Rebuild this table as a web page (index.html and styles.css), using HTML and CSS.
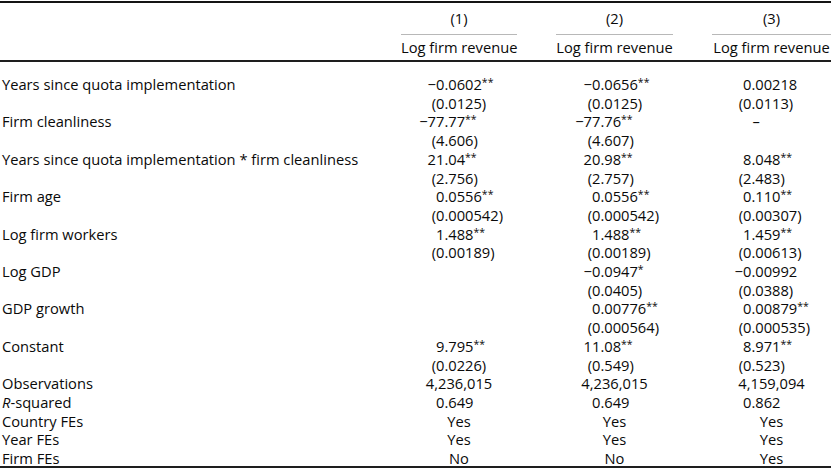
FILE: index.html
```html
<!DOCTYPE html>
<html lang="en">
<head>
<meta charset="utf-8">
<title>Regression table</title>
<link rel="stylesheet" href="styles.css">
</head>
<body>
<div class="tbl">
  <div class="row head1">
    <div class="lab"></div>
    <div class="c">(1)</div>
    <div class="c">(2)</div>
    <div class="c">(3)</div>
  </div>
  <div class="row head2">
    <div class="lab"></div>
    <div class="c">Log firm revenue</div>
    <div class="c">Log firm revenue</div>
    <div class="c">Log firm revenue</div>
  </div>
  <div class="body">
    <div class="row">
      <div class="lab">Years since quota implementation</div>
      <div class="c1"><span class="i">−0</span>.0602<sup>**</sup></div>
      <div class="c2"><span class="i">−0</span>.0656<sup>**</sup></div>
      <div class="c3"><span class="i">0</span>.00218</div>
    </div>
    <div class="row">
      <div class="lab"></div>
      <div class="c1"><span class="i">(0</span>.0125)</div>
      <div class="c2"><span class="i">(0</span>.0125)</div>
      <div class="c3"><span class="i">(0</span>.0113)</div>
    </div>
    <div class="row">
      <div class="lab">Firm cleanliness</div>
      <div class="c1"><span class="i">−77</span>.77<sup>**</sup></div>
      <div class="c2"><span class="i">−77</span>.76<sup>**</sup></div>
      <div class="c3"><span class="i"></span><span class="dash">–</span></div>
    </div>
    <div class="row">
      <div class="lab"></div>
      <div class="c1"><span class="i">(4</span>.606)</div>
      <div class="c2"><span class="i">(4</span>.607)</div>
      <div class="c3"></div>
    </div>
    <div class="row">
      <div class="lab">Years since quota implementation * firm cleanliness</div>
      <div class="c1"><span class="i">21</span>.04<sup>**</sup></div>
      <div class="c2"><span class="i">20</span>.98<sup>**</sup></div>
      <div class="c3"><span class="i">8</span>.048<sup>**</sup></div>
    </div>
    <div class="row">
      <div class="lab"></div>
      <div class="c1"><span class="i">(2</span>.756)</div>
      <div class="c2"><span class="i">(2</span>.757)</div>
      <div class="c3"><span class="i">(2</span>.483)</div>
    </div>
    <div class="row">
      <div class="lab">Firm age</div>
      <div class="c1"><span class="i">0</span>.0556<sup>**</sup></div>
      <div class="c2"><span class="i">0</span>.0556<sup>**</sup></div>
      <div class="c3"><span class="i">0</span>.110<sup>**</sup></div>
    </div>
    <div class="row">
      <div class="lab"></div>
      <div class="c1"><span class="i">(0</span>.000542)</div>
      <div class="c2"><span class="i">(0</span>.000542)</div>
      <div class="c3"><span class="i">(0</span>.00307)</div>
    </div>
    <div class="row">
      <div class="lab">Log firm workers</div>
      <div class="c1"><span class="i">1</span>.488<sup>**</sup></div>
      <div class="c2"><span class="i">1</span>.488<sup>**</sup></div>
      <div class="c3"><span class="i">1</span>.459<sup>**</sup></div>
    </div>
    <div class="row">
      <div class="lab"></div>
      <div class="c1"><span class="i">(0</span>.00189)</div>
      <div class="c2"><span class="i">(0</span>.00189)</div>
      <div class="c3"><span class="i">(0</span>.00613)</div>
    </div>
    <div class="row">
      <div class="lab">Log GDP</div>
      <div class="c1"></div>
      <div class="c2"><span class="i">−0</span>.0947<sup>*</sup></div>
      <div class="c3"><span class="i">−0</span>.00992</div>
    </div>
    <div class="row">
      <div class="lab"></div>
      <div class="c1"></div>
      <div class="c2"><span class="i">(0</span>.0405)</div>
      <div class="c3"><span class="i">(0</span>.0388)</div>
    </div>
    <div class="row">
      <div class="lab">GDP growth</div>
      <div class="c1"></div>
      <div class="c2"><span class="i">0</span>.00776<sup>**</sup></div>
      <div class="c3"><span class="i">0</span>.00879<sup>**</sup></div>
    </div>
    <div class="row">
      <div class="lab"></div>
      <div class="c1"></div>
      <div class="c2"><span class="i">(0</span>.000564)</div>
      <div class="c3"><span class="i">(0</span>.000535)</div>
    </div>
    <div class="row">
      <div class="lab">Constant</div>
      <div class="c1"><span class="i">9</span>.795<sup>**</sup></div>
      <div class="c2"><span class="i">11</span>.08<sup>**</sup></div>
      <div class="c3"><span class="i">8</span>.971<sup>**</sup></div>
    </div>
    <div class="row">
      <div class="lab"></div>
      <div class="c1"><span class="i">(0</span>.0226)</div>
      <div class="c2"><span class="i">(0</span>.549)</div>
      <div class="c3"><span class="i">(0</span>.523)</div>
    </div>
    <div class="row">
      <div class="lab">Observations</div>
      <div class="c1 ctr">4,236,015</div>
      <div class="c2 ctr">4,236,015</div>
      <div class="c3 ctr">4,159,094</div>
    </div>
    <div class="row">
      <div class="lab"><i>R</i>-squared</div>
      <div class="c1"><span class="i">0</span>.649</div>
      <div class="c2"><span class="i">0</span>.649</div>
      <div class="c3"><span class="i">0</span>.862</div>
    </div>
    <div class="row">
      <div class="lab">Country FEs</div>
      <div class="c1 ctr">Yes</div>
      <div class="c2 ctr">Yes</div>
      <div class="c3 ctr">Yes</div>
    </div>
    <div class="row">
      <div class="lab">Year FEs</div>
      <div class="c1 ctr">Yes</div>
      <div class="c2 ctr">Yes</div>
      <div class="c3 ctr">Yes</div>
    </div>
    <div class="row last">
      <div class="lab">Firm FEs</div>
      <div class="c1 ctr">No</div>
      <div class="c2 ctr">No</div>
      <div class="c3 ctr">Yes</div>
    </div>
  </div>
</div>
</body>
</html>
```

FILE: styles.css
```css
html, body {
  margin: 0;
  padding: 0;
  background: #ffffff;
}

body {
  font-family: "Open Sans", "Noto Sans", sans-serif;
  font-size: 14.7px;
  color: #0a0a0a;
}

.tbl {
  width: 831px;
  margin-top: 1px;
  border-top: 2px solid #141414;
  border-bottom: 2px solid #1e1e1e;
}

.row {
  display: grid;
  grid-template-columns: 362px 116px 117px 119px;
  column-gap: 39px;
  line-height: 18.7px;
  white-space: nowrap;
}

.head1 {
  padding-top: 6px;
}

.head1 .c {
  text-align: center;
  padding-bottom: 6px;
  border-bottom: 1px solid #b8b8b8;
}

.head2 {
  padding-top: 3.3px;
  padding-bottom: 3.3px;
  border-bottom: 2px solid #1e1e1e;
}

.head2 .c {
  text-align: center;
}

.body {
  padding-top: 13px;
}

.lab {
  padding-left: 2px;
}

.c1 { --iw: 43.4px; }
.c2 { --iw: 44.4px; }
.c3 { --iw: 39.4px; }

.i {
  display: inline-block;
  width: var(--iw);
  text-align: right;
}

.dash {
  padding-left: 1px;
}

.ctr {
  text-align: center;
}

sup {
  font-size: 10.5px;
  line-height: 0;
  vertical-align: 4px;
}

.last {
  height: 16.6px;
  overflow: visible;
}
```
